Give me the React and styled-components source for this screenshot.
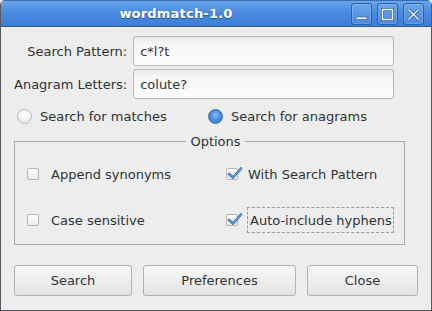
import React from 'react';
import styled, { createGlobalStyle } from 'styled-components';

const GlobalStyle = createGlobalStyle`
  html, body {
    margin: 0;
    padding: 0;
    background: #ffffff;
  }
  body {
    font-family: "DejaVu Sans", "Noto Sans", sans-serif;
  }
`;

const Window = styled.div`
  width: 432px;
  height: 311px;
  box-sizing: border-box;
  display: flex;
  flex-direction: column;
  border-radius: 5px 5px 0 0;
  overflow: hidden;
  background: #ededed;
  border: 1px solid #555a60;
  border-top: none;
`;

const TitleBar = styled.div`
  height: 27px;
  flex-shrink: 0;
  display: flex;
  align-items: center;
  position: relative;
  background: linear-gradient(#6aa6ea, #4a8be0 45%, #3f7fd6);
  border-bottom: 1px solid #2c5d9e;
  border-top: 1px solid #3a6db0;
  box-sizing: border-box;
`;

const Title = styled.div`
  flex: 1;
  text-align: center;
  padding-right: 80px;
  color: #ffffff;
  font-weight: bold;
  font-size: 13px;
  letter-spacing: 0.2px;
  text-shadow: 0 1px 1px #28508a;
`;

const WinButtons = styled.div`
  position: absolute;
  right: 7px;
  top: 2px;
  display: flex;
  gap: 5px;
`;

const WinButton = styled.div`
  width: 21px;
  height: 22px;
  box-sizing: border-box;
  border: 1px solid #2f5f9c;
  border-radius: 3px;
  background: linear-gradient(#6aa6ea, #4a88dc);
  box-shadow: inset 0 0 0 1px rgba(255, 255, 255, 0.15);
  display: flex;
  align-items: center;
  justify-content: center;
  svg {
    display: block;
  }
`;

const Body = styled.div`
  flex: 1;
  display: flex;
  flex-direction: column;
  padding: 9px 13px 0 13px;
  font-size: 13px;
  color: #2e3436;
`;

const FieldGrid = styled.div`
  display: grid;
  grid-template-columns: auto 1fr;
  column-gap: 6px;
  row-gap: 3px;
  align-items: center;
  margin-right: 24px;
`;

const FieldLabel = styled.label`
  text-align: right;
  white-space: nowrap;
`;

const TextInput = styled.div`
  height: 30px;
  box-sizing: border-box;
  border: 1px solid #b6b6b3;
  border-radius: 3px;
  background: linear-gradient(#e8e8e8, #f7f7f7 25%, #fbfbfb);
  display: flex;
  align-items: center;
  padding: 0 6px;
  color: #2e3436;
`;

const RadioRow = styled.div`
  display: grid;
  grid-template-columns: 191px 1fr;
  margin-top: 8px;
  padding-left: 3px;
  height: 18px;
  align-items: center;
`;

const Choice = styled.div`
  display: flex;
  align-items: center;
  gap: ${p => p.$gap || 8}px;
  white-space: nowrap;
`;

const Radio = styled.span`
  width: 15px;
  height: 15px;
  box-sizing: border-box;
  border-radius: 50%;
  border: 1px solid ${p => (p.$on ? '#3d6fb1' : '#b9b9b6')};
  background: ${p =>
    p.$on
      ? 'radial-gradient(circle at 50% 40%, #8ec0f4 0, #4b8fe0 45%, #2f6ec2 100%)'
      : 'radial-gradient(circle at 50% 35%, #ffffff 0, #f2f2f0 50%, #dcdcda 100%)'};
  flex-shrink: 0;
`;

const Frame = styled.fieldset`
  margin: 9px 13px 0 0;
  padding: 2px 0 0 12px;
  border: 1px solid #a9a9a7;
  border-radius: 0;
  height: 111px;
  box-sizing: border-box;
  display: grid;
  grid-template-columns: 199px 1fr;
  grid-template-rows: 46px 46px;
  align-content: start;
  align-items: center;
  legend {
    margin: 0 auto;
    padding: 0 4px;
    color: #2e3436;
  }
`;

const Check = styled.span`
  width: 12px;
  height: 12px;
  box-sizing: border-box;
  border: 1px solid #b5b5b2;
  border-radius: 2px;
  background: linear-gradient(#ffffff, #ececea);
  flex-shrink: 0;
  position: relative;
  svg {
    position: absolute;
    left: 0;
    top: -3px;
  }
`;

const Focus = styled.span`
  border: 1px dashed #9a9a98;
  padding: 5px 1px 4px 2px;
  margin-left: -1px;
`;

const ButtonRow = styled.div`
  display: grid;
  grid-template-columns: 118px 153px 111px;
  column-gap: 11px;
  margin-top: 20px;
`;

const Button = styled.div`
  height: 31px;
  box-sizing: border-box;
  border: 1px solid #b1b1ae;
  border-radius: 3px;
  background: linear-gradient(#f7f7f6, #e4e4e2);
  display: flex;
  align-items: center;
  justify-content: center;
  color: #2e3436;
`;

const Tick = () => (
  <svg width="16" height="14" viewBox="0 0 16 14">
    <path d="M2 8 L6 11.5 L14 2.5" fill="none" stroke="#2f6cc0" strokeWidth="2.6" strokeLinecap="round" strokeLinejoin="round" />
    <path d="M2 8 L6 11.5 L14 2.5" fill="none" stroke="#7fb2ee" strokeWidth="1" strokeLinecap="round" strokeLinejoin="round" />
  </svg>
);

const CheckItem = ({ on, focus, children }) => (
  <Choice $gap={on ? 10 : 12}>
    <Check>{on && <Tick />}</Check>
    {focus ? <Focus>{children}</Focus> : <span>{children}</span>}
  </Choice>
);

const App = () => {
  return (
    <>
      <GlobalStyle />
      <Window>
        <TitleBar>
          <Title>wordmatch-1.0</Title>
          <WinButtons>
            <WinButton>
              <svg width="13" height="13" viewBox="0 0 13 13">
                <rect x="1" y="9" width="11" height="2.5" fill="#e9f1fb" stroke="#2b5894" strokeWidth="0.6" />
              </svg>
            </WinButton>
            <WinButton>
              <svg width="13" height="13" viewBox="0 0 13 13">
                <rect x="1.5" y="1.5" width="10" height="10" fill="none" stroke="#2b5894" strokeWidth="3" />
                <rect x="1.5" y="1.5" width="10" height="10" fill="none" stroke="#e9f1fb" strokeWidth="1.6" />
              </svg>
            </WinButton>
            <WinButton>
              <svg width="13" height="13" viewBox="0 0 13 13">
                <path d="M1.5 1.5 L11.5 11.5 M11.5 1.5 L1.5 11.5" stroke="#2b5894" strokeWidth="3" />
                <path d="M1.5 1.5 L11.5 11.5 M11.5 1.5 L1.5 11.5" stroke="#e9f1fb" strokeWidth="1.5" />
              </svg>
            </WinButton>
          </WinButtons>
        </TitleBar>
        <Body>
          <FieldGrid>
            <FieldLabel>Search Pattern:</FieldLabel>
            <TextInput>c*l?t</TextInput>
            <FieldLabel>Anagram Letters:</FieldLabel>
            <TextInput>colute?</TextInput>
          </FieldGrid>
          <RadioRow>
            <Choice>
              <Radio />
              <span>Search for matches</span>
            </Choice>
            <Choice>
              <Radio $on />
              <span>Search for anagrams</span>
            </Choice>
          </RadioRow>
          <Frame>
            <legend>Options</legend>
            <CheckItem>Append synonyms</CheckItem>
            <CheckItem on>With Search Pattern</CheckItem>
            <CheckItem>Case sensitive</CheckItem>
            <CheckItem on focus>Auto-include hyphens</CheckItem>
          </Frame>
          <ButtonRow>
            <Button>Search</Button>
            <Button>Preferences</Button>
            <Button>Close</Button>
          </ButtonRow>
        </Body>
      </Window>
    </>
  );
};

export default App;
